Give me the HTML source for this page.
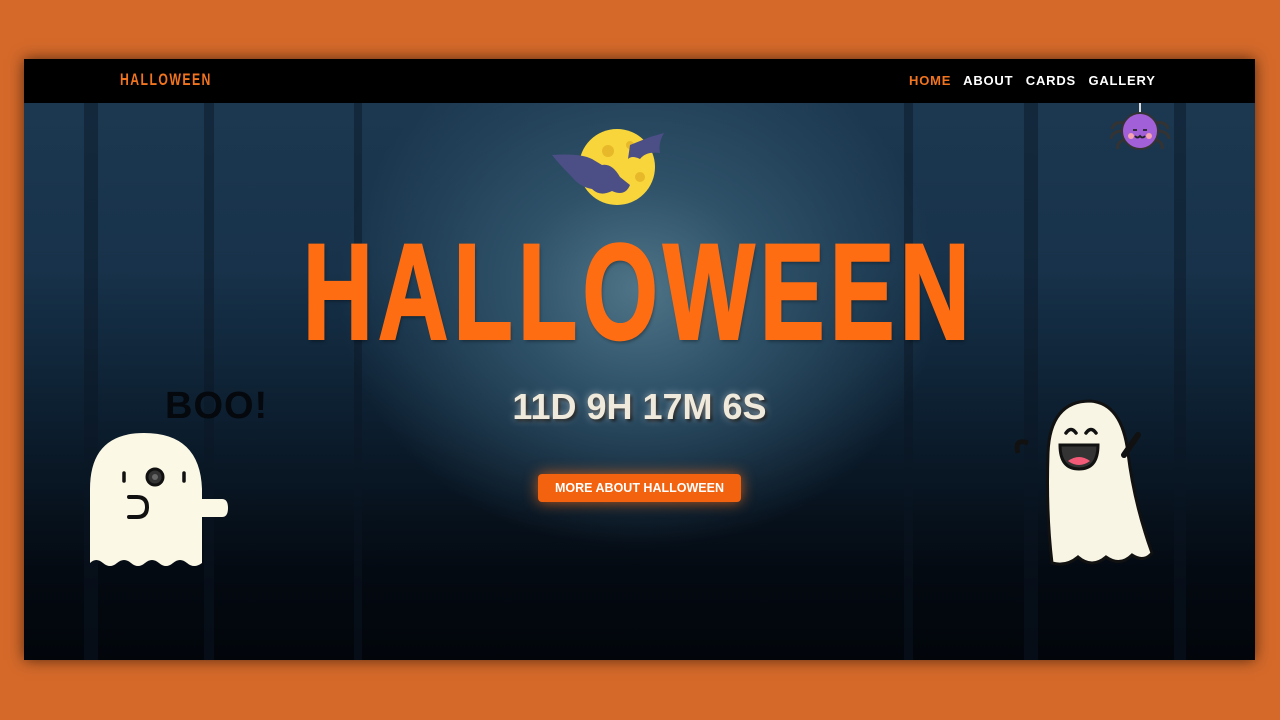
<!DOCTYPE html>
<html><head><meta charset="utf-8"><style>
*{margin:0;padding:0;box-sizing:border-box}
body{width:1280px;height:720px;background:#d4692a;position:relative;overflow:hidden;font-family:"Liberation Sans",sans-serif}
#page{position:absolute;left:24px;top:59px;width:1231px;height:601px;overflow:hidden;box-shadow:0 0 14px rgba(0,0,0,.6);
background:radial-gradient(ellipse 300px 260px at 615px 230px,#4f7487 0%,#2f5269 40%,rgba(20,40,58,0) 100%),
linear-gradient(#1d3a52 0%,#17324a 35%,#0c1e2f 60%,#040a12 85%,#02060b 100%)}
nav{position:absolute;left:0;top:0;width:100%;height:44px;background:#000}
.logo{position:absolute;left:96px;top:11px;width:93px;color:#f2741e;font-weight:bold;font-size:17px;letter-spacing:2px;white-space:nowrap}
.logo span{display:inline-block;transform:scaleX(.72);transform-origin:left center}
.links{position:absolute;top:14px;left:885px;font-weight:bold;font-size:13px;letter-spacing:.8px;color:#fff;white-space:nowrap}
.links span{margin-right:8px}
.tree{position:absolute;background:#0b1723;opacity:.45}
h1{position:absolute;left:0;top:163px;width:1231px;text-align:center;color:#ff6d12;font-weight:bold;font-size:140px;line-height:140px;white-space:nowrap}
h1 span{display:inline-block;transform:scaleX(.69) scaleY(.97);letter-spacing:8px;text-shadow:2px 3px 4px rgba(0,0,0,.35);-webkit-text-stroke:3px #ff6d12}
.cd{position:absolute;left:0;width:1231px;text-align:center;top:327px;color:#efeadb;font-size:36px;font-weight:bold;text-shadow:0 0 8px rgba(255,255,255,.5),2px 2px 3px #000}
.btn{position:absolute;left:514px;top:415px;width:203px;height:28px;background:#f2620f;border-radius:4px;color:#fff;font-weight:bold;font-size:12.5px;text-align:center;line-height:28px;box-shadow:0 0 14px rgba(255,110,20,.7)}
.boo{position:absolute;left:141px;top:326px;font-size:38px;font-weight:bold;color:#05080c;letter-spacing:1px}
svg{position:absolute}
</style></head><body>
<div id="page">
<div class="tree" style="left:60px;top:44px;width:14px;height:560px"></div>
<div class="tree" style="left:180px;top:44px;width:10px;height:560px"></div>
<div class="tree" style="left:330px;top:44px;width:8px;height:560px"></div>
<div class="tree" style="left:880px;top:44px;width:9px;height:560px"></div>
<div class="tree" style="left:1000px;top:44px;width:14px;height:560px"></div>
<div class="tree" style="left:1150px;top:44px;width:12px;height:560px"></div>
<nav><div class="logo"><span>HALLOWEEN</span></div>
<div class="links"><span style="color:#f2741e">HOME</span> <span>ABOUT</span> <span>CARDS</span> <span>GALLERY</span></div></nav>
<svg style="left:1080px;top:44px" width="70" height="52" viewBox="0 0 70 52">
<line x1="36" y1="0" x2="36" y2="12" stroke="#ddd" stroke-width="2"/>
<g stroke="#333" stroke-width="3" fill="none"><path d="M20 20 Q10 18 8 26"/><path d="M19 28 Q8 28 7 36"/><path d="M21 36 Q12 40 14 46"/><path d="M52 20 Q62 18 64 26"/><path d="M53 28 Q64 28 65 36"/><path d="M51 36 Q60 40 58 46"/></g>
<circle cx="36" cy="28" r="18" fill="#a160d8" stroke="#333" stroke-width="2"/>
<circle cx="27" cy="33" r="3" fill="#f7a3b0"/><circle cx="45" cy="33" r="3" fill="#f7a3b0"/>
<path d="M29 27h4M39 27h4M31 33q2.5 3 5 0q2.5 3 5 0" stroke="#222" stroke-width="1.8" fill="none"/>
</svg>
<svg style="left:526px;top:66px" width="120" height="84" viewBox="0 0 120 84">
<circle cx="67" cy="42" r="38" fill="#f8d53a"/>
<circle cx="58" cy="26" r="6" fill="#e7b92a"/><circle cx="80" cy="20" r="4" fill="#e7b92a"/><circle cx="90" cy="52" r="5" fill="#e7b92a"/><circle cx="60" cy="58" r="4" fill="#e7b92a"/>
<path d="M2 30 Q30 28 42 34 L52 40 Q62 38 70 52 L80 60 Q75 72 62 66 Q50 72 42 64 Q30 62 22 52 Q10 40 2 30Z" fill="#4c4f86"/>
<path d="M80 20 L100 12 L114 8 Q108 18 110 28 Q96 26 90 34 Q82 30 78 34 Z" fill="#4c4f86"/>
</svg>
<h1><span>HALLOWEEN</span></h1>
<div class="cd">11D 9H 17M 6S</div>
<div class="btn">MORE ABOUT HALLOWEEN</div>
<div class="boo">BOO!</div>
<svg style="left:60px;top:370px" width="150" height="140" viewBox="0 0 150 140">
<path d="M6 134 L6 60 Q6 4 60 4 Q116 4 118 60 L118 134 Q110 140 103 134 Q96 128 89 134 Q82 140 75 134 Q68 128 61 134 Q54 140 47 134 Q40 128 33 134 Q26 140 19 134 Q12 128 6 134Z" fill="#fbf8e6"/>
<path d="M118 70 h20 q6 0 6 9 q0 9 -6 9 h-20Z" fill="#fbf8e6"/>
<line x1="40" y1="44" x2="40" y2="52" stroke="#111" stroke-width="3.5" stroke-linecap="round"/>
<line x1="100" y1="44" x2="100" y2="52" stroke="#111" stroke-width="3.5" stroke-linecap="round"/>
<circle cx="71" cy="48" r="8" fill="#333" stroke="#111" stroke-width="3"/><circle cx="71" cy="48" r="3" fill="#666"/>
<path d="M45 68 h8 q10 0 10 10 q0 10 -10 10 h-8" stroke="#111" stroke-width="4" fill="none" stroke-linecap="round"/>
</svg>
<svg style="left:990px;top:334px" width="150" height="176" viewBox="0 0 150 176">
<path d="M4 60 Q0 45 14 50" stroke="#111" stroke-width="5" fill="none"/>
<path d="M38 170 Q32 120 34 60 Q36 8 76 8 Q108 10 114 60 Q120 110 138 160 Q130 170 118 162 Q106 174 92 164 Q78 176 64 164 Q52 174 38 170Z" fill="#f8f5e4" stroke="#111" stroke-width="3"/>
<path d="M110 62 L124 42" stroke="#111" stroke-width="6" stroke-linecap="round"/>
<path d="M52 40 q5 -7 10 0 M72 40 q5 -7 10 0" stroke="#111" stroke-width="3.5" fill="none" stroke-linecap="round"/>
<path d="M46 52 h38 q0 24 -19 24 q-19 0 -19 -24Z" fill="#333" stroke="#111" stroke-width="3"/>
<path d="M54 68 q11 -8 22 0 q-11 8 -22 0Z" fill="#f25a78"/>
</svg>
</div>
</body></html>
